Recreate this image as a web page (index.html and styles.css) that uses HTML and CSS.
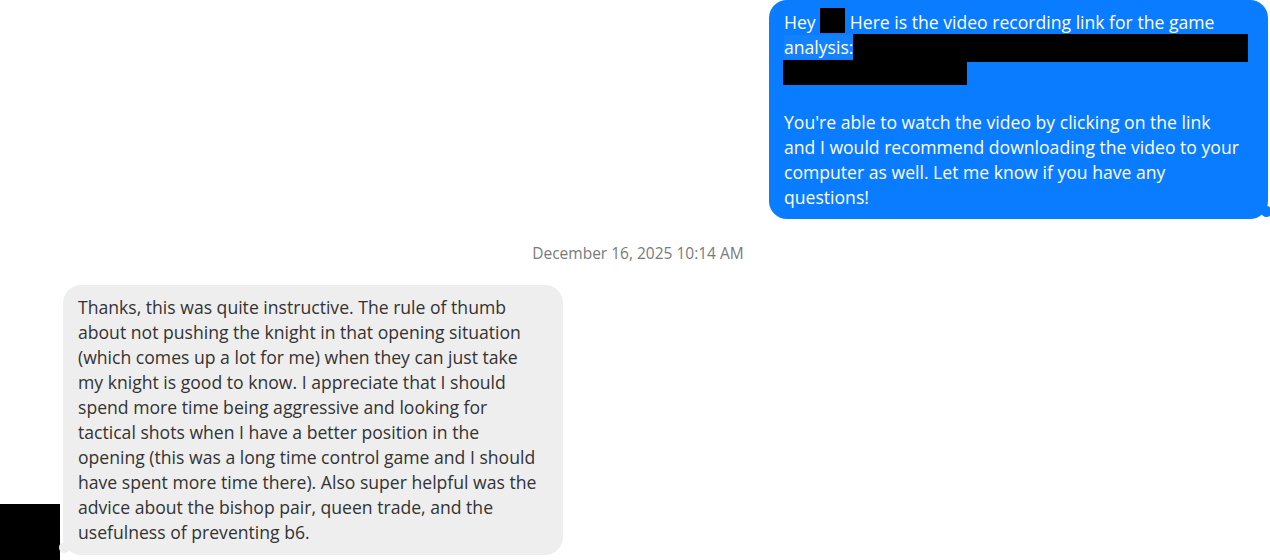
FILE: index.html
```html
<!DOCTYPE html>
<html>
<head>
<meta charset="utf-8">
<link rel="stylesheet" href="styles.css">
</head>
<body>
<div class="thread">
  <div class="row row-out">
    <div class="bubble bubble-out">
      <div class="line">Hey <span class="redact r-name"></span> Here is the video recording link for the game</div>
      <div class="line"><span class="sel">analysis:</span><span class="redact r-link1"></span></div>
      <div class="line"><span class="redact r-link2"></span></div>
      <div class="line">&nbsp;</div>
      <div class="line">You're able to watch the video by clicking on the link</div>
      <div class="line">and I would recommend downloading the video to your</div>
      <div class="line">computer as well. Let me know if you have any</div>
      <div class="line">questions!</div>
      <span class="tail tail-out"></span>
    </div>
  </div>
  <div class="stamp">December 16, 2025 10:14 AM</div>
  <div class="row row-in">
    <div class="avatar"></div>
    <div class="bubble bubble-in">
      <div class="line">Thanks, this was quite instructive. The rule of thumb</div>
      <div class="line">about not pushing the knight in that opening situation</div>
      <div class="line">(which comes up a lot for me) when they can just take</div>
      <div class="line">my knight is good to know. I appreciate that I should</div>
      <div class="line">spend more time being aggressive and looking for</div>
      <div class="line">tactical shots when I have a better position in the</div>
      <div class="line">opening (this was a long time control game and I should</div>
      <div class="line">have spent more time there). Also super helpful was the</div>
      <div class="line">advice about the bishop pair, queen trade, and the</div>
      <div class="line">usefulness of preventing b6.</div>
      <span class="tail tail-in"></span>
    </div>
  </div>
</div>
</body>
</html>
```
FILE: styles.css
```css
html, body {
  margin: 0;
  padding: 0;
  background: #ffffff;
  overflow: hidden;
}
body {
  width: 1270px;
  height: 560px;
  font-family: "Open Sans", "Noto Sans", sans-serif;
}
.thread {
  display: flex;
  flex-direction: column;
}
.row {
  display: flex;
}
.row-out {
  justify-content: flex-end;
  padding-right: 2px;
}
.row-in {
  align-items: flex-end;
  gap: 3px;
  margin-top: 21px;
}
.bubble {
  position: relative;
  box-sizing: border-box;
  width: 500px;
  padding: 10px 15px 10px 15px;
  border-radius: 18px;
  font-size: 17.6px;
  line-height: 25px;
  white-space: nowrap;
}
.bubble-out {
  width: 499px;
  background: #0a7cff;
  color: #ffffff;
  padding-bottom: 9px;
}
.bubble-in {
  background: #eeeeee;
  color: #333333;
}
.line {
  height: 25px;
}
.redact {
  display: inline-block;
  background: #000000;
  vertical-align: top;
}
.r-name {
  width: 25px;
  height: 25px;
  margin-top: -2px;
}
.sel {
  background: #1482ff;
}
.r-link1 {
  width: 395px;
  height: 28px;
  margin-top: -1px;
}
.r-link2 {
  width: 184px;
  height: 25px;
  margin-left: -1px;
}
.tail {
  position: absolute;
  width: 11px;
  height: 11px;
  border-radius: 50%;
}
.tail-out {
  right: -4px;
  bottom: 2px;
  background: #0a7cff;
}
.tail-in {
  left: -4px;
  bottom: 2px;
  background: #eeeeee;
}
.avatar {
  width: 60px;
  height: 60px;
  background: #000000;
  margin-bottom: -9px;
  flex-shrink: 0;
}
.stamp {
  margin-top: 24px;
  text-align: center;
  font-size: 15.5px;
  line-height: 21px;
  color: #7a7a7a;
  padding-left: 6px;
}
```
